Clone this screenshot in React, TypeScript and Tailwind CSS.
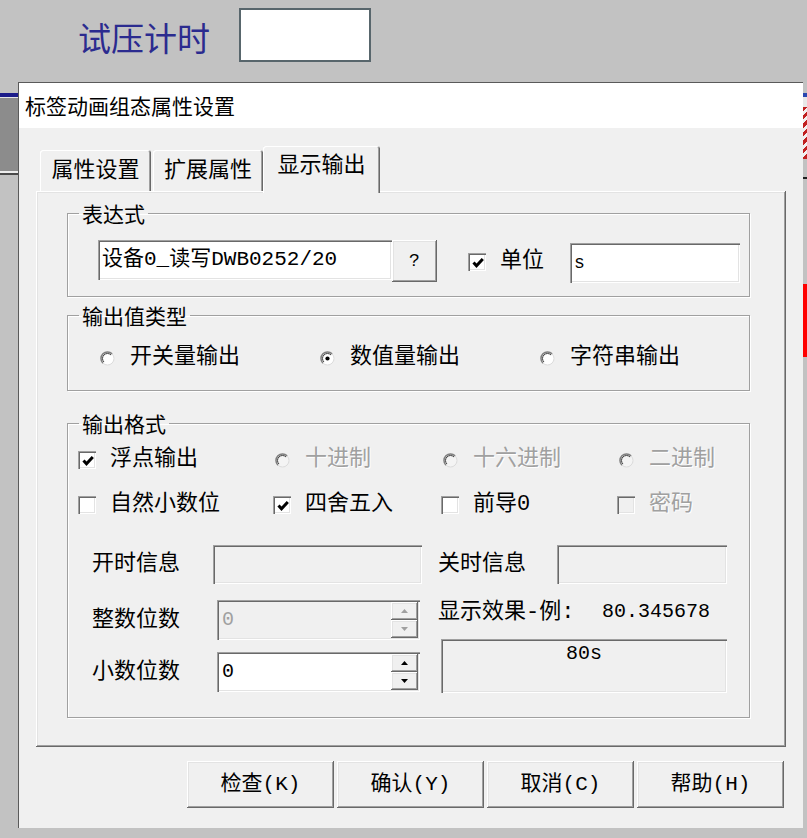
import type { ReactNode } from 'react';

const SUNKEN = 'shadow-[inset_1px_1px_#a0a0a0,inset_2px_2px_#696969,inset_-1px_-1px_#ffffff,inset_-2px_-2px_#e3e3e3]';
const RAISED = 'shadow-[inset_-1px_-1px_#696969,inset_1px_1px_#ffffff,inset_-2px_-2px_#a0a0a0,inset_2px_2px_#e3e3e3]';
const ETCHED = 'border border-[#a0a0a0] shadow-[inset_1px_1px_#ffffff,1px_1px_#ffffff]';

function CheckBox({ checked = false, disabled = false }: { checked?: boolean; disabled?: boolean }) {
  return (
    <div className={`w-[18px] h-[18px] shrink-0 flex items-center justify-center pl-[1px] pt-[1px] ${SUNKEN} ${disabled ? 'bg-[#f0f0f0]' : 'bg-white'}`}>
      {checked && (
        <svg width="12" height="12" viewBox="0 0 12 12">
          <path d="M1.5 5.5 L4.5 8.8 L10.8 2" fill="none" stroke="#000" strokeWidth="3" />
        </svg>
      )}
    </div>
  );
}

function Radio({ checked = false, disabled = false }: { checked?: boolean; disabled?: boolean }) {
  return (
    <div className="w-[18px] h-[18px] shrink-0 flex items-center justify-center">
      <svg width="15" height="15" viewBox="0 0 15 15">
        <circle cx="7.5" cy="7.5" r="6.5" fill={disabled ? '#f4f4f4' : '#ffffff'} stroke="#dcdcdc" strokeWidth="1" />
        <path d="M2.9 12.1 A6.5 6.5 0 0 1 12.1 2.9" fill="none" stroke="#808080" strokeWidth="1.5" />
        <path d="M3.96 11.04 A5 5 0 0 1 11.04 3.96" fill="none" stroke="#404040" strokeWidth="1" />
        {checked && <circle cx="7.5" cy="7.5" r="2.1" fill="#000" />}
      </svg>
    </div>
  );
}

function Option({ box, label, disabled = false, className = '' }: { box: ReactNode; label: string; disabled?: boolean; className?: string }) {
  return (
    <div className={`flex items-center h-[24px] ${className}`}>
      {box}
      <span className={`ml-[14px] text-[22px] leading-[24px] ${disabled ? 'text-[#a0a0a0] [text-shadow:1px_1px_#ffffff]' : ''}`}>{label}</span>
    </div>
  );
}

function Arrow({ up, disabled }: { up: boolean; disabled: boolean }) {
  return (
    <div className={`flex-1 bg-[#f0f0f0] flex items-center justify-center ${RAISED}`}>
      <svg width="7" height="4" viewBox="0 0 7 4">
        <path d={up ? 'M0 4 L3.5 0 L7 4 Z' : 'M0 0 L3.5 4 L7 0 Z'} fill={disabled ? '#a0a0a0' : '#000'} />
      </svg>
    </div>
  );
}

function Spin({ value, disabled = false }: { value: string; disabled?: boolean }) {
  return (
    <div className={`w-[203px] h-[40px] flex p-[2px] ${SUNKEN} ${disabled ? 'bg-[#f0f0f0] text-[#a0a0a0]' : 'bg-white'}`}>
      <div className="flex-1 pl-[3px] flex items-center text-[20px]">{value}</div>
      <div className="w-[27px] flex flex-col">
        <Arrow up disabled={disabled} />
        <Arrow up={false} disabled={disabled} />
      </div>
    </div>
  );
}

function Tab({ label, selected = false, className = '' }: { label: string; selected?: boolean; className?: string }) {
  return (
    <div
      className={`flex items-center justify-center bg-[#f0f0f0] rounded-t-[3px] text-[22px] shadow-[inset_1px_1px_#ffffff,inset_-1px_0_#696969,inset_-2px_0_#a0a0a0] ${
        selected ? 'h-[47px] -mb-[2px] relative z-10 pb-[6px]' : 'h-[41px] pt-[2px]'
      } ${className}`}
    >
      {label}
    </div>
  );
}

function Button({ label }: { label: string }) {
  return (
    <div className={`w-[147px] h-[47px] flex items-center justify-center bg-[#f0f0f0] text-[21px] ${RAISED}`}>{label}</div>
  );
}

export default function App() {
  return (
    <div className="w-[807px] h-[838px] bg-[#c2c2c2] overflow-hidden text-black font-['Liberation_Mono','Noto_Sans_CJK_SC',monospace]">
      {/* window behind the dialog */}
      <div className="h-[82px] flex items-start">
        <div className="ml-[78px] mt-[17px] text-[33px] leading-[40px] text-[#2b2b8f] font-['Noto_Sans_CJK_SC',sans-serif]">试压计时</div>
        <div className="ml-[29px] mt-[8px] w-[132px] h-[54px] bg-white border-2 border-[#58666c]" />
      </div>

      <div className="flex h-[746px]">
        <div className="w-[18px] flex flex-col">
          <div className="h-[11px]" />
          <div className="h-[4px] bg-[#1c1c8a]" />
          <div className="h-[1px] bg-[#e6e6e6]" />
          <div className="h-[73px] bg-[#8c8c8c]" />
          <div className="h-[2px] bg-[#eeeeee]" />
          <div className="h-[2px] bg-[#4a4a4a]" />
        </div>

        {/* dialog */}
        <div className="w-[785px] h-[746px] bg-[#f0f0f0] border-l border-t border-[#5a5a5a] flex flex-col">
          <div className="h-[45px] bg-white pl-[6px] flex items-center text-[21px] font-['Noto_Sans_CJK_SC',sans-serif]">标签动画组态属性设置</div>

          <div className="mt-[18px] h-[45px] pl-[21px] flex items-end">
            <Tab label="属性设置" className="w-[111px]" />
            <Tab label="扩展属性" className="w-[110px] ml-[2px]" />
            <Tab label="显示输出" selected className="w-[117px]" />
          </div>

          <div className={`ml-[17px] w-[750px] h-[556px] pt-[11px] flex flex-col ${RAISED}`}>
            {/* 表达式 */}
            <fieldset className={`ml-[31px] w-[683px] h-[95px] ${ETCHED}`}>
              <legend className="ml-[11px] px-[3px] text-[21px] leading-[22px] font-['Noto_Sans_CJK_SC',sans-serif]">表达式</legend>
              <div className="mt-[16px] ml-[30px] flex items-start">
                <div className={`w-[294px] h-[40px] bg-white pl-[4px] flex items-center text-[21px] ${SUNKEN}`}>设备0_读写DWB0252/20</div>
                <div className={`w-[45px] h-[42px] bg-[#f0f0f0] flex items-center justify-center text-[18px] ${RAISED}`}>?</div>
                <div className="ml-[31px] mt-[13px] flex items-center">
                  <CheckBox checked />
                  <span className="ml-[14px] text-[22px] leading-[18px]">单位</span>
                </div>
                <div className={`ml-[26px] mt-[3px] w-[170px] h-[40px] bg-white pl-[4px] flex items-center text-[18px] ${SUNKEN}`}>s</div>
              </div>
            </fieldset>

            {/* 输出值类型 */}
            <fieldset className={`mt-[7px] ml-[31px] w-[683px] h-[87px] ${ETCHED}`}>
              <legend className="ml-[11px] px-[3px] text-[21px] leading-[22px] font-['Noto_Sans_CJK_SC',sans-serif]">输出值类型</legend>
              <div className="mt-[20px] ml-[30px] flex">
                <Option className="w-[220px]" box={<Radio />} label="开关量输出" />
                <Option className="w-[220px]" box={<Radio checked />} label="数值量输出" />
                <Option box={<Radio />} label="字符串输出" />
              </div>
            </fieldset>

            {/* 输出格式 */}
            <fieldset className={`mt-[21px] ml-[31px] w-[683px] h-[306px] ${ETCHED}`}>
              <legend className="ml-[11px] px-[3px] text-[21px] leading-[22px] font-['Noto_Sans_CJK_SC',sans-serif]">输出格式</legend>
              <div className="mt-[14px] ml-[10px] flex">
                <Option className="w-[195px]" box={<CheckBox checked />} label="浮点输出" />
                <Option className="w-[168px]" box={<Radio disabled />} label="十进制" disabled />
                <Option className="w-[176px]" box={<Radio disabled />} label="十六进制" disabled />
                <Option box={<Radio disabled />} label="二进制" disabled />
              </div>
              <div className="mt-[21px] ml-[10px] flex">
                <Option className="w-[195px]" box={<CheckBox />} label="自然小数位" />
                <Option className="w-[168px]" box={<CheckBox checked />} label="四舍五入" />
                <Option className="w-[176px]" box={<CheckBox />} label="前导0" />
                <Option box={<CheckBox disabled />} label="密码" disabled />
              </div>

              <div className="mt-[28px] ml-[24px] flex text-[22px]">
                <div className="w-[330px] flex flex-col">
                  <div className="h-[39px] flex items-center">
                    <span className="w-[121px]">开时信息</span>
                    <div className={`w-[209px] h-[39px] bg-[#f0f0f0] ${SUNKEN}`} />
                  </div>
                  <div className="mt-[16px] h-[40px] flex items-center">
                    <span className="w-[125px]">整数位数</span>
                    <Spin value="0" disabled />
                  </div>
                  <div className="mt-[12px] h-[40px] flex items-center">
                    <span className="w-[125px]">小数位数</span>
                    <Spin value="0" />
                  </div>
                </div>
                <div className="ml-[16px] flex flex-col">
                  <div className="h-[39px] flex items-center">
                    <span className="w-[119px]">关时信息</span>
                    <div className={`w-[170px] h-[39px] bg-[#f0f0f0] ${SUNKEN}`} />
                  </div>
                  <div className="mt-[16px] h-[24px] flex items-center">
                    <span className="w-[164px]">显示效果-例:</span>
                    <span className="text-[20px]">80.345678</span>
                  </div>
                  <div className={`mt-[15px] ml-[3px] w-[286px] h-[54px] bg-[#f0f0f0] flex justify-center pt-[5px] text-[20px] leading-[20px] ${SUNKEN}`}>80s</div>
                </div>
              </div>
            </fieldset>
          </div>

          <div className="mt-[14px] pl-[168px] flex gap-[3px]">
            <Button label="检查(K)" />
            <Button label="确认(Y)" />
            <Button label="取消(C)" />
            <Button label="帮助(H)" />
          </div>
        </div>

        <div className="w-[4px] flex flex-col">
          <div className="h-[11px]" />
          <div className="h-[4px] bg-[#2a48b0]" />
          <div className="h-[10px] bg-[#e8e8e8]" />
          <div className="h-[52px] bg-[repeating-linear-gradient(135deg,#c02020_0_3px,#f0f0f0_3px_6px)]" />
          <div className="h-[18px]" />
          <div className="h-[2px] bg-[#202020]" />
          <div className="h-[105px]" />
          <div className="h-[73px] bg-[#ff0000]" />
        </div>
      </div>
    </div>
  );
}
